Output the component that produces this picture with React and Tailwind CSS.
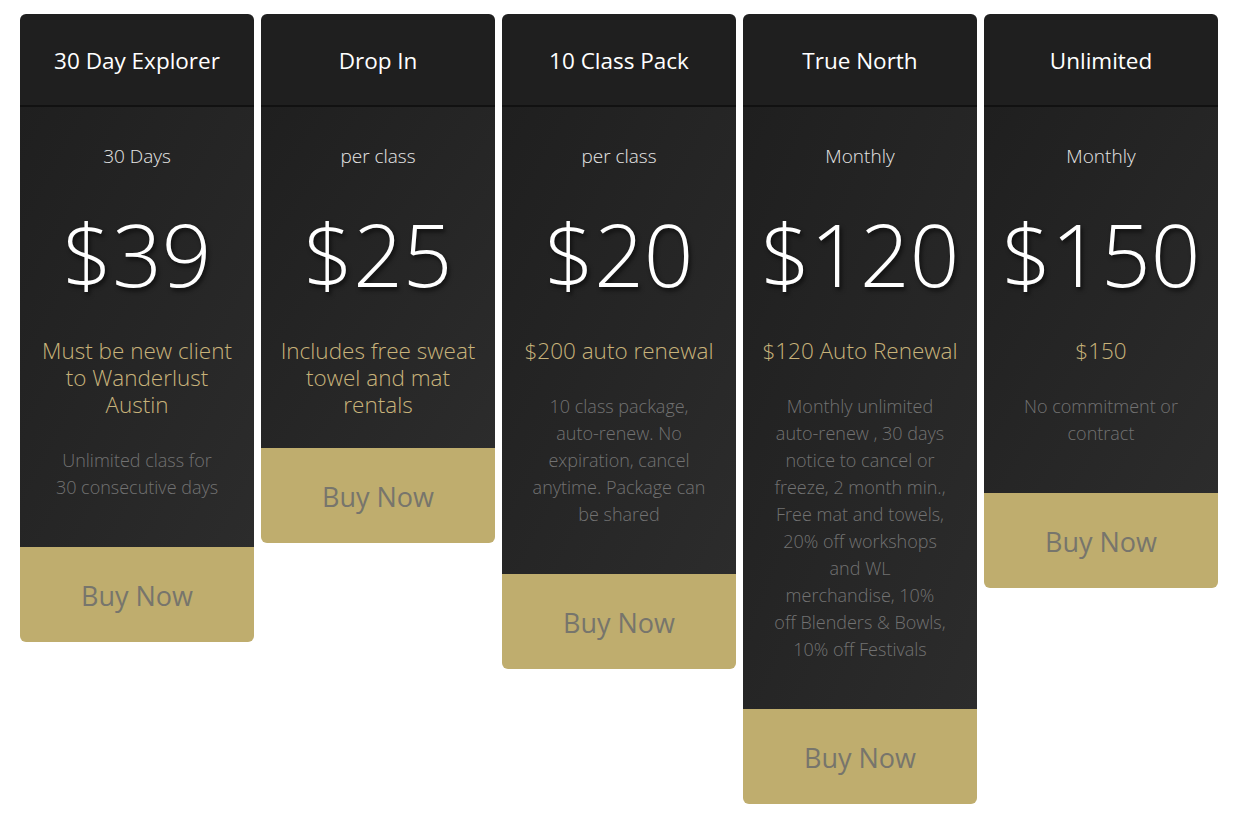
import React from 'react';

const plans = [
  {
    title: '30 Day Explorer',
    period: '30 Days',
    price: '$39',
    note: ['Must be new client', 'to Wanderlust', 'Austin'],
    desc: ['Unlimited class for', '30 consecutive days'],
  },
  {
    title: 'Drop In',
    period: 'per class',
    price: '$25',
    note: ['Includes free sweat', 'towel and mat', 'rentals'],
    desc: [],
  },
  {
    title: '10 Class Pack',
    period: 'per class',
    price: '$20',
    note: ['$200 auto renewal'],
    desc: ['10 class package,', 'auto-renew. No', 'expiration, cancel', 'anytime. Package can', 'be shared'],
  },
  {
    title: 'True North',
    period: 'Monthly',
    price: '$120',
    note: ['$120 Auto Renewal'],
    desc: [
      'Monthly unlimited',
      'auto-renew , 30 days',
      'notice to cancel or',
      'freeze, 2 month min.,',
      'Free mat and towels,',
      '20% off workshops',
      'and WL',
      'merchandise, 10%',
      'off Blenders & Bowls,',
      '10% off Festivals',
    ],
  },
  {
    title: 'Unlimited',
    period: 'Monthly',
    price: '$150',
    note: ['$150'],
    desc: ['No commitment or', 'contract'],
  },
];

// fixed line breaks so wrapping matches the original cards
const Lines = ({ lines }) =>
  lines.map((line, i) => (
    <React.Fragment key={i}>
      {i > 0 && <br />}
      {line}
    </React.Fragment>
  ));

const PlanCard = ({ plan }) => (
  <div className="w-[234px] shrink-0 rounded-md overflow-hidden flex flex-col">
    <div className="h-[93px] pt-[3px] bg-[#1f1f1f] border-b-2 border-[#111111] flex items-center justify-center">
      <h3 className="text-[22.5px] text-white font-normal">{plan.title}</h3>
    </div>
    <div className="bg-gradient-to-br from-[#1f1f1f] to-[#2c2c2c] px-[10px] pt-[36px] pb-[30px] text-center">
      <div className="text-[19px] leading-[27px] font-light text-[#e6e6e6]">{plan.period}</div>
      <div className="text-[87px] leading-[166px] mb-[1px] font-light text-white [text-shadow:2px_3px_4px_rgba(0,0,0,0.6)]">
        {plan.price}
      </div>
      <div className="text-[22.5px] leading-[27px] font-light text-[#c8b37a] whitespace-nowrap">
        <Lines lines={plan.note} />
      </div>
      {plan.desc.length > 0 && (
        <p className="mt-[29px] mb-[16px] text-[18px] leading-[27px] font-light text-[#727272] whitespace-nowrap">
          <Lines lines={plan.desc} />
        </p>
      )}
    </div>
    <button className="h-[95px] pt-[3px] bg-[#bfad6e] text-[27px] text-[#77756c] font-normal">Buy Now</button>
  </div>
);

export default function App() {
  return (
    <div className="min-h-screen bg-white pt-[14px] pl-[20px] font-['Open_Sans',sans-serif]">
      <div className="flex items-start gap-[7px]">
        {plans.map((plan) => (
          <PlanCard key={plan.title} plan={plan} />
        ))}
      </div>
    </div>
  );
}
